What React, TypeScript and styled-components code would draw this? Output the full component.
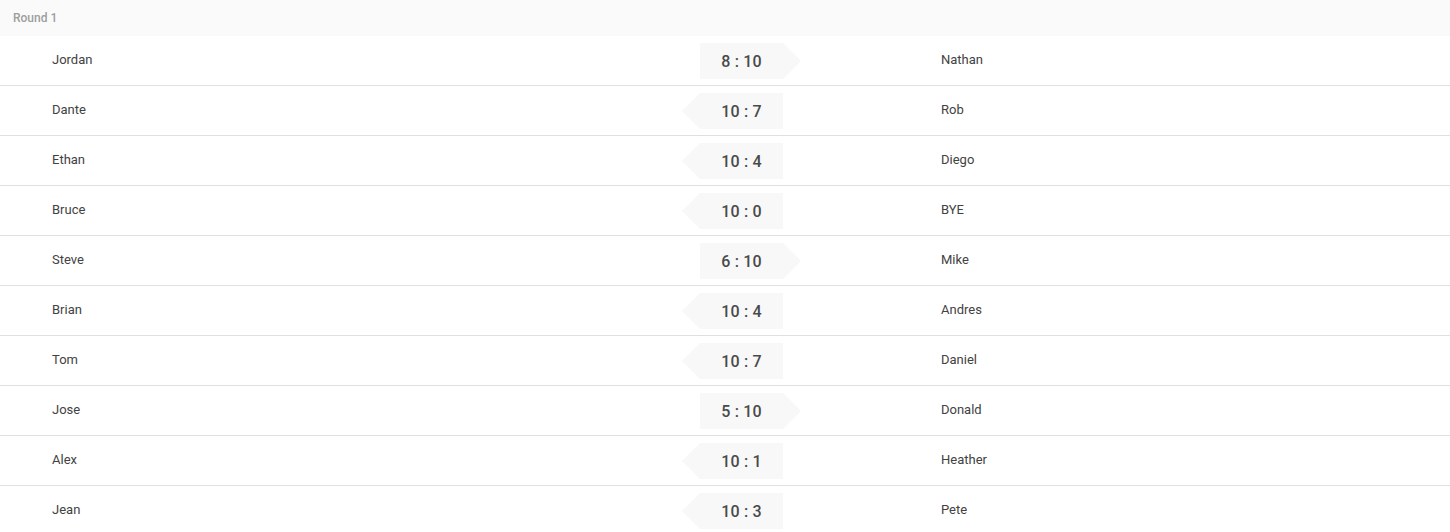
import styled, { createGlobalStyle } from 'styled-components';

type Match = { home: string; away: string; homeScore: number; awayScore: number };

const matches: Match[] = [
  { home: 'Jordan', away: 'Nathan', homeScore: 8, awayScore: 10 },
  { home: 'Dante', away: 'Rob', homeScore: 10, awayScore: 7 },
  { home: 'Ethan', away: 'Diego', homeScore: 10, awayScore: 4 },
  { home: 'Bruce', away: 'BYE', homeScore: 10, awayScore: 0 },
  { home: 'Steve', away: 'Mike', homeScore: 6, awayScore: 10 },
  { home: 'Brian', away: 'Andres', homeScore: 10, awayScore: 4 },
  { home: 'Tom', away: 'Daniel', homeScore: 10, awayScore: 7 },
  { home: 'Jose', away: 'Donald', homeScore: 5, awayScore: 10 },
  { home: 'Alex', away: 'Heather', homeScore: 10, awayScore: 1 },
  { home: 'Jean', away: 'Pete', homeScore: 10, awayScore: 3 },
];

const GlobalStyle = createGlobalStyle`
  body {
    margin: 0;
    background: #fff;
    font-family: Roboto, "Liberation Sans", sans-serif;
  }
`;

const App = () => (
  <>
    <GlobalStyle />
    <Round>
      <RoundHeader>Round 1</RoundHeader>
      {matches.map((m) => (
        <MatchRow key={m.home}>
          <Player>{m.home}</Player>
          <Score winner={m.homeScore > m.awayScore ? 'left' : 'right'}>
            {m.homeScore} : {m.awayScore}
          </Score>
          <Opponent>{m.away}</Opponent>
        </MatchRow>
      ))}
    </Round>
  </>
);

export default App;

const Round = styled.section`
  display: flex;
  flex-direction: column;
`;

const RoundHeader = styled.div`
  height: 36px;
  display: flex;
  align-items: center;
  padding-left: 13px;
  background: #fafafa;
  color: #9e9e9e;
  font-size: 12px;
  font-weight: 500;
`;

const MatchRow = styled.div`
  display: grid;
  grid-template-columns: 700px 83px 1fr;
  align-items: center;
  height: 50px;
  box-sizing: border-box;
  border-bottom: 1px solid #e0e0e0;
  font-size: 13px;
  color: #424242;
`;

const Player = styled.div`
  padding-left: 52px;
  padding-bottom: 2px;
`;

const Opponent = styled(Player)`
  padding-left: 158px;
`;

const Score = styled.div<{ winner: 'left' | 'right' }>`
  position: relative;
  height: 36px;
  margin-top: 1px;
  display: flex;
  align-items: center;
  justify-content: center;
  background: #f8f8f8;
  color: #4a4a4a;
  font-size: 16px;
  font-weight: 500;
  letter-spacing: 0.2px;

  &::before {
    content: '';
    position: absolute;
    top: 0;
    width: 0;
    height: 0;
    border-top: 18px solid transparent;
    border-bottom: 18px solid transparent;
    ${({ winner }) =>
      winner === 'left'
        ? 'right: 100%; border-right: 18px solid #f8f8f8;'
        : 'left: 100%; border-left: 18px solid #f8f8f8;'}
  }
`;
